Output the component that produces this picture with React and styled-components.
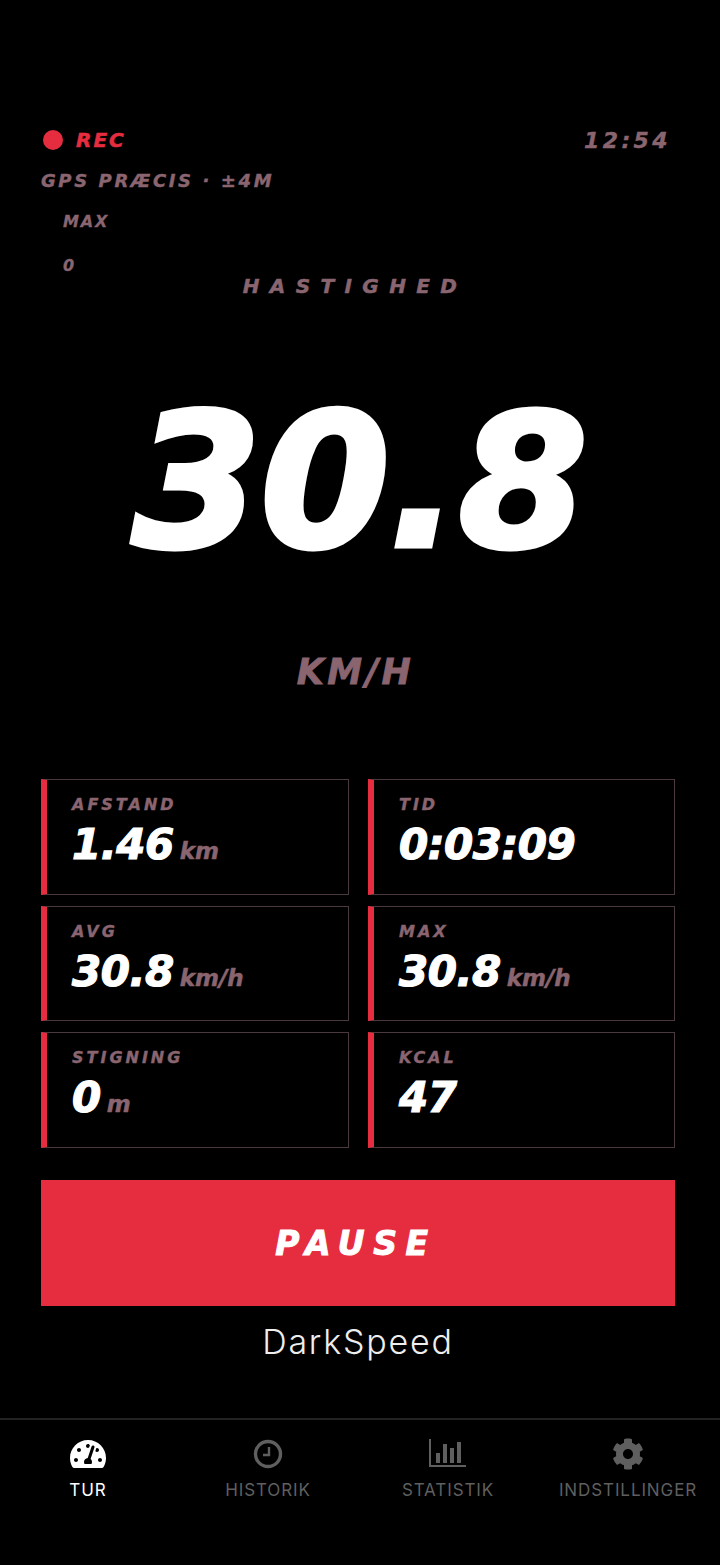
import React from "react";
import styled, { createGlobalStyle } from "styled-components";
import { FaTachometerAlt, FaCog } from "react-icons/fa";

const GlobalStyle = createGlobalStyle`
  html, body {
    margin: 0;
    padding: 0;
    background: #000;
  }
`;

const display = `"DejaVu Sans", "Liberation Sans", sans-serif`;

const Page = styled.div`
  width: 720px;
  height: 1565px;
  background: #000;
  display: flex;
  flex-direction: column;
  overflow: hidden;
  font-family: ${display};
  font-style: italic;
  font-weight: 700;
`;

const Main = styled.div`
  flex: 1;
  display: flex;
  flex-direction: column;
  padding: 126px 45px 0 41px;
`;

const TopRow = styled.div`
  display: flex;
  justify-content: space-between;
  align-items: center;
  height: 28px;
`;

const Rec = styled.div`
  display: flex;
  align-items: center;
  gap: 13px;
  color: #e62d40;
  font-size: 20px;
  letter-spacing: 2px;
  padding-left: 2px;
  -webkit-text-stroke: 0.5px #e62d40;
`;

const Dot = styled.span`
  width: 20px;
  height: 20px;
  border-radius: 50%;
  background: #e62d40;
`;

const Clock = styled.div`
  color: #8a6570;
  font-size: 22px;
  letter-spacing: 3.4px;
  margin-right: 4px;
  -webkit-text-stroke: 0.4px #8a6570;
`;

const Gps = styled.div`
  color: #8a6570;
  font-size: 18px;
  letter-spacing: 2.6px;
  line-height: 24px;
  margin-top: 15px;
  -webkit-text-stroke: 0.4px #8a6570;
`;

const MaxBlock = styled.div`
  padding-left: 22px;
  color: #8a6570;
  font-size: 16px;
  letter-spacing: 1.8px;
  -webkit-text-stroke: 0.3px #8a6570;
`;

const MaxLabel = styled.div`
  line-height: 20px;
  margin-top: 19px;
`;

const MaxValue = styled.div`
  line-height: 20px;
  margin-top: 24px;
`;

const SpeedLabel = styled.div`
  color: #8a6570;
  font-size: 20px;
  letter-spacing: 10.4px;
  text-align: center;
  line-height: 24px;
  margin: -2px 0 0 -6px;
  -webkit-text-stroke: 0.5px #8a6570;
`;

const SpeedWrap = styled.div`
  display: flex;
  justify-content: center;
  margin-top: 84px;
  padding-right: 2px;
`;

const Speed = styled.div`
  width: 454px;
  height: 200px;
  padding-left: 4px;
  overflow: hidden;
  color: #fff;
  font-size: 186px;
  line-height: 200px;
  letter-spacing: -1px;
  white-space: nowrap;
  -webkit-text-stroke: 5px #fff;
`;

const Unit = styled.div`
  color: #8a6570;
  font-size: 35px;
  letter-spacing: 3.4px;
  text-align: center;
  line-height: 40px;
  margin: 70px 0 0 -5px;
  -webkit-text-stroke: 0.8px #8a6570;
`;

const Grid = styled.div`
  display: grid;
  grid-template-columns: 308px 307px;
  grid-auto-rows: 115.5px;
  column-gap: 19px;
  row-gap: 11px;
  margin-top: 87px;
`;

const Card = styled.div`
  box-sizing: border-box;
  border: 1px solid #4a3a40;
  border-left: 6px solid #e62d40;
  padding: 14px 0 0 25px;
`;

const CardLabel = styled.div`
  color: #8a6570;
  font-size: 16px;
  letter-spacing: 3px;
  line-height: 22px;
  -webkit-text-stroke: 0.4px #8a6570;
`;

const CardValue = styled.div`
  display: flex;
  align-items: baseline;
  gap: 6px;
  margin-top: 3px;
  color: #fff;
  font-size: 42px;
  line-height: 52px;
  letter-spacing: -0.5px;
  -webkit-text-stroke: 1.2px #fff;
`;

const CardUnit = styled.span`
  color: #8a6570;
  font-size: 23px;
  letter-spacing: 0;
  -webkit-text-stroke: 0.5px #8a6570;
`;

const PauseButton = styled.button`
  height: 126px;
  margin-top: 32.5px;
  padding: 0 4px 0 0;
  border: 0;
  background: #e62d40;
  color: #fff;
  font: italic 700 33px ${display};
  letter-spacing: 8.6px;
  -webkit-text-stroke: 1px #fff;
`;

const Brand = styled.div`
  color: #eee;
  font: 300 34px "Inter", sans-serif;
  letter-spacing: 1.8px;
  text-align: center;
  line-height: 40px;
  margin: 16px 0 0 0;
`;

const Tabs = styled.nav`
  display: grid;
  grid-template-columns: repeat(4, 180px);
  height: 147px;
  margin-left: -2px;
  border-top: 2px solid #222;
  box-sizing: border-box;
`;

const Tab = styled.div`
  display: flex;
  flex-direction: column;
  align-items: center;
  padding-top: 18px;
  color: ${(p) => (p.$active ? "#fff" : "#5f5f5f")};
  font: 400 17px "Inter", sans-serif;
  letter-spacing: 0.9px;
  white-space: nowrap;
`;

const IconSlot = styled.div`
  height: 32px;
  display: flex;
  align-items: center;
  justify-content: center;
  margin-bottom: 10px;
  svg {
    display: block;
  }
`;

function ClockIcon() {
  return (
    <svg width="30" height="30" viewBox="0 0 30 30" fill="none" stroke="currentColor">
      <circle cx="15" cy="15" r="12.5" strokeWidth="3.4" />
      <path d="M16 8v8H10" strokeWidth="2.4" />
    </svg>
  );
}

function ChartIcon() {
  return (
    <svg width="38" height="30" viewBox="0 0 38 30" fill="currentColor">
      <path d="M0 0h2v26h35v2H0z" />
      <path d="M7 14h4v10H7zM14 5h4v19h-4zM21 9h4v15h-4zM28 3h4v21h-4z" />
    </svg>
  );
}

const stats = [
  { label: "AFSTAND", value: "1.46", unit: "km" },
  { label: "TID", value: "0:03:09" },
  { label: "AVG", value: "30.8", unit: "km/h" },
  { label: "MAX", value: "30.8", unit: "km/h" },
  { label: "STIGNING", value: "0", unit: "m" },
  { label: "KCAL", value: "47" },
];

export default function App() {
  return (
    <Page>
      <GlobalStyle />
      <Main>
        <TopRow>
          <Rec>
            <Dot />
            REC
          </Rec>
          <Clock>12:54</Clock>
        </TopRow>
        <Gps>GPS PRÆCIS · ±4M</Gps>
        <MaxBlock>
          <MaxLabel>MAX</MaxLabel>
          <MaxValue>0</MaxValue>
        </MaxBlock>
        <SpeedLabel>HASTIGHED</SpeedLabel>
        <SpeedWrap>
          <Speed>30.8</Speed>
        </SpeedWrap>
        <Unit>KM/H</Unit>
        <Grid>
          {stats.map((s) => (
            <Card key={s.label}>
              <CardLabel>{s.label}</CardLabel>
              <CardValue>
                {s.value}
                {s.unit && <CardUnit>{s.unit}</CardUnit>}
              </CardValue>
            </Card>
          ))}
        </Grid>
        <PauseButton>PAUSE</PauseButton>
        <Brand>DarkSpeed</Brand>
      </Main>
      <Tabs>
        <Tab $active>
          <IconSlot>
            <FaTachometerAlt size={36} />
          </IconSlot>
          TUR
        </Tab>
        <Tab>
          <IconSlot>
            <ClockIcon />
          </IconSlot>
          HISTORIK
        </Tab>
        <Tab>
          <IconSlot>
            <ChartIcon />
          </IconSlot>
          STATISTIK
        </Tab>
        <Tab>
          <IconSlot>
            <FaCog size={32} />
          </IconSlot>
          INDSTILLINGER
        </Tab>
      </Tabs>
    </Page>
  );
}
